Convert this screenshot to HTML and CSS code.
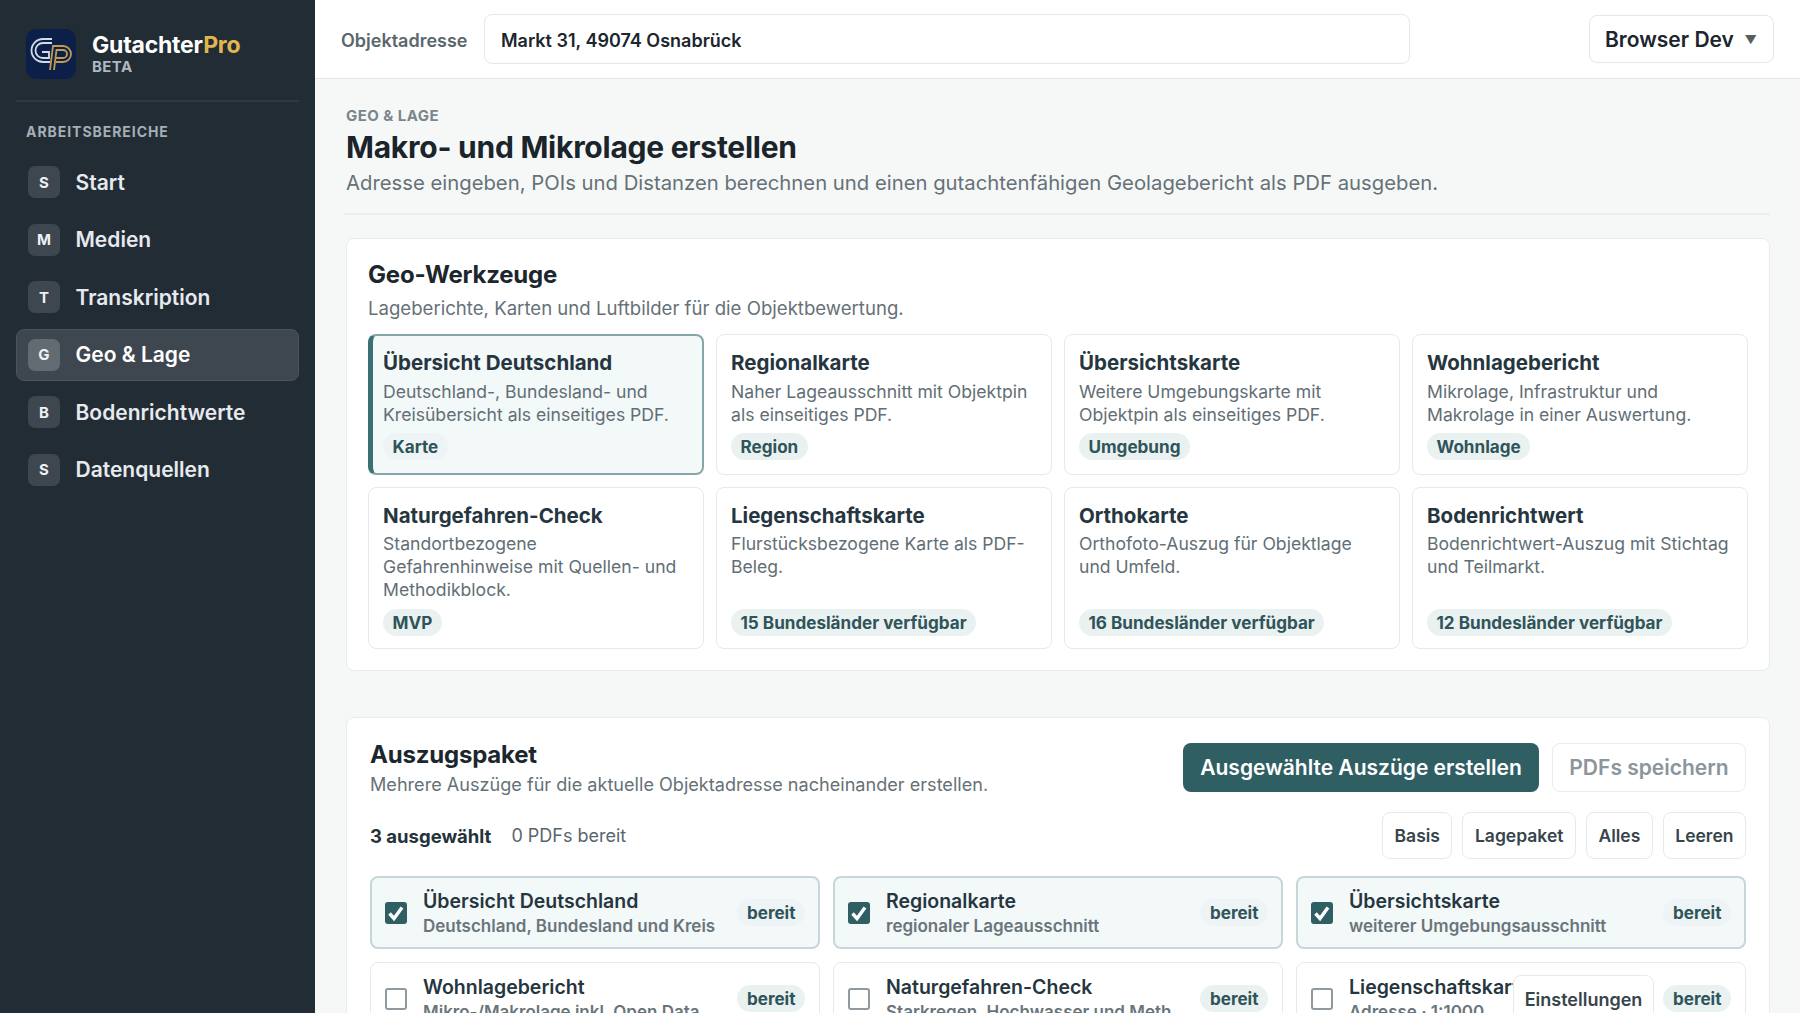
FILE: index.html
```html
<!DOCTYPE html>
<html lang="de">
<head>
  <meta charset="UTF-8">
  <title>GutachterPro</title>
  <link rel="stylesheet" href="styles.css">
</head>
<body>
  <!-- Sidebar -->
  <aside class="sidebar">
    <div class="brand">
      <svg class="logo" viewBox="0 0 50 50">
        <rect width="50" height="50" rx="10" fill="#0b1f48"/>
        <g fill="none" stroke-width="1.800">
          <path d="M26 10H17A11.500 11.500 0 0 0 17 33H24" stroke="#d5dbe6"/>
          <path d="M26 14H17A7.500 7.500 0 0 0 17 29H23V23H16" stroke="#d5dbe6"/>
          <path d="M24 41L27 17H37A8 8 0 0 1 37 33H30" stroke="#c39a54"/>
          <path d="M28 41L30.500 21H37A4 4 0 0 1 37 29H30" stroke="#c39a54"/>
        </g>
      </svg>
      <div class="brand-text">
        <div class="brand-name">Gutachter<span>Pro</span></div>
        <div class="brand-tag">BETA</div>
      </div>
    </div>
    <div class="nav-title">ARBEITSBEREICHE</div>
    <nav class="nav">
      <a class="nav-item"><span class="nav-key">S</span>Start</a>
      <a class="nav-item"><span class="nav-key">M</span>Medien</a>
      <a class="nav-item"><span class="nav-key">T</span>Transkription</a>
      <a class="nav-item active"><span class="nav-key">G</span>Geo &amp; Lage</a>
      <a class="nav-item"><span class="nav-key">B</span>Bodenrichtwerte</a>
      <a class="nav-item"><span class="nav-key">S</span>Datenquellen</a>
    </nav>
  </aside>

  <div class="main">
    <!-- Top bar -->
    <header class="topbar">
      <label class="address-label">Objektadresse</label>
      <div class="address-input">Markt 31, 49074 Osnabrück</div>
      <div class="profile-select">Browser Dev <span class="caret">▼</span></div>
    </header>

    <main class="content">
      <div class="page-head">
        <div class="eyebrow">GEO &amp; LAGE</div>
        <h1>Makro- und Mikrolage erstellen</h1>
        <p>Adresse eingeben, POIs und Distanzen berechnen und einen gutachtenfähigen Geolagebericht als PDF ausgeben.</p>
      </div>

      <section class="panel tools">
        <h2>Geo-Werkzeuge</h2>
        <p class="panel-sub">Lageberichte, Karten und Luftbilder für die Objektbewertung.</p>
        <div class="tool-grid">
          <div class="tool active">
            <h3>Übersicht Deutschland</h3>
            <p>Deutschland-, Bundesland- und Kreisübersicht als einseitiges PDF.</p>
            <span class="tag">Karte</span>
          </div>
          <div class="tool">
            <h3>Regionalkarte</h3>
            <p>Naher Lageausschnitt mit Objektpin als einseitiges PDF.</p>
            <span class="tag">Region</span>
          </div>
          <div class="tool">
            <h3>Übersichtskarte</h3>
            <p>Weitere Umgebungskarte mit Objektpin als einseitiges PDF.</p>
            <span class="tag">Umgebung</span>
          </div>
          <div class="tool">
            <h3>Wohnlagebericht</h3>
            <p>Mikrolage, Infrastruktur und Makrolage in einer Auswertung.</p>
            <span class="tag">Wohnlage</span>
          </div>
          <div class="tool">
            <h3>Naturgefahren-Check</h3>
            <p>Standortbezogene Gefahrenhinweise mit Quellen- und Methodikblock.</p>
            <span class="tag">MVP</span>
          </div>
          <div class="tool">
            <h3>Liegenschaftskarte</h3>
            <p>Flurstücksbezogene Karte als PDF-Beleg.</p>
            <span class="tag">15 Bundesländer verfügbar</span>
          </div>
          <div class="tool">
            <h3>Orthokarte</h3>
            <p>Orthofoto-Auszug für Objektlage und Umfeld.</p>
            <span class="tag">16 Bundesländer verfügbar</span>
          </div>
          <div class="tool">
            <h3>Bodenrichtwert</h3>
            <p>Bodenrichtwert-Auszug mit Stichtag und Teilmarkt.</p>
            <span class="tag">12 Bundesländer verfügbar</span>
          </div>
        </div>
      </section>

      <section class="panel package">
        <div class="package-head">
          <div>
            <h2>Auszugspaket</h2>
            <p class="panel-sub">Mehrere Auszüge für die aktuelle Objektadresse nacheinander erstellen.</p>
          </div>
          <div class="package-actions">
            <button class="btn-primary">Ausgewählte Auszüge erstellen</button>
            <button class="btn-disabled">PDFs speichern</button>
          </div>
        </div>
        <div class="package-bar">
          <div class="package-count"><strong>3 ausgewählt</strong><span>0 PDFs bereit</span></div>
          <div class="chips">
            <button class="chip">Basis</button>
            <button class="chip">Lagepaket</button>
            <button class="chip">Alles</button>
            <button class="chip">Leeren</button>
          </div>
        </div>
        <div class="extract-grid">
          <div class="extract checked">
            <span class="check"><svg viewBox="0 0 22 22"><path d="M4.500 11.500L9 16.500L17 5.500" fill="none" stroke="#fff" stroke-width="3.400"/></svg></span>
            <div class="extract-text"><h4>Übersicht Deutschland</h4><small>Deutschland, Bundesland und Kreis</small></div>
            <span class="tag">bereit</span>
          </div>
          <div class="extract checked">
            <span class="check"><svg viewBox="0 0 22 22"><path d="M4.500 11.500L9 16.500L17 5.500" fill="none" stroke="#fff" stroke-width="3.400"/></svg></span>
            <div class="extract-text"><h4>Regionalkarte</h4><small>regionaler Lageausschnitt</small></div>
            <span class="tag">bereit</span>
          </div>
          <div class="extract checked">
            <span class="check"><svg viewBox="0 0 22 22"><path d="M4.500 11.500L9 16.500L17 5.500" fill="none" stroke="#fff" stroke-width="3.400"/></svg></span>
            <div class="extract-text"><h4>Übersichtskarte</h4><small>weiterer Umgebungsausschnitt</small></div>
            <span class="tag">bereit</span>
          </div>
          <div class="extract">
            <span class="check"></span>
            <div class="extract-text"><h4>Wohnlagebericht</h4><small>Mikro-/Makrolage inkl. Open Data</small></div>
            <span class="tag">bereit</span>
          </div>
          <div class="extract">
            <span class="check"></span>
            <div class="extract-text"><h4>Naturgefahren-Check</h4><small>Starkregen, Hochwasser und Meth</small></div>
            <span class="tag">bereit</span>
          </div>
          <div class="extract">
            <span class="check"></span>
            <div class="extract-text"><h4>Liegenschaftskarte</h4><small>Adresse · 1:1000</small></div>
            <span class="tag">bereit</span>
          </div>
        </div>
      </section>
    </main>
  </div>

  <button class="settings-btn">Einstellungen</button>
</body>
</html>
```
FILE: styles.css
```css
* {
  box-sizing: border-box;
}
html, body {
  height: 100%;
}
body {
  margin: 0;
  display: flex;
  overflow: hidden;
  font-family: Inter, "Liberation Sans", sans-serif;
  color: #1c262d;
  background: #f6f8f8;
}
h1, h2, h3, h4, p {
  margin: 0;
}
button {
  font-family: inherit;
  cursor: pointer;
}

/* Sidebar */
.sidebar {
  width: 315px;
  flex-shrink: 0;
  background: #222c35;
  padding: 29px 16px 0;
}
.brand {
  display: flex;
  align-items: center;
  gap: 16px;
  padding: 0 10px 21px;
  border-bottom: 2px solid #2e3942;
}
.logo {
  width: 50px;
  height: 50px;
  flex-shrink: 0;
}
.brand-text {
  margin-top: -2px;
}
.brand-name {
  font-size: 23px;
  line-height: 26px;
  font-weight: 700;
  color: #fff;
  letter-spacing: -0.2px;
}
.brand-name span {
  color: #e0b64f;
}
.brand-tag {
  margin-top: 1px;
  font-size: 15px;
  line-height: 16px;
  font-weight: 700;
  color: #aeb8c0;
  letter-spacing: 0.4px;
}
.nav-title {
  margin: 21px 0 15px 10px;
  font-size: 14px;
  line-height: 18px;
  font-weight: 700;
  color: #a4afb7;
  letter-spacing: 0.95px;
}
.nav {
  display: flex;
  flex-direction: column;
  gap: 5px;
}
.nav-item {
  display: flex;
  align-items: center;
  gap: 15.500px;
  height: 52.500px;
  padding: 0 11px;
  border: 1px solid transparent;
  border-radius: 8px;
  font-size: 21px;
  font-weight: 600;
  color: #e6eaee;
}
.nav-item.active {
  background: #3e4750;
  border-color: #4a545c;
  color: #fff;
}
.nav-key {
  width: 32px;
  height: 32px;
  display: flex;
  align-items: center;
  justify-content: center;
  border-radius: 7px;
  background: #3e4750;
  font-size: 15px;
  font-weight: 700;
  color: #eef1f3;
}
.nav-item.active .nav-key {
  background: #626a72;
}

/* Top bar */
.main {
  flex: 1;
  min-width: 0;
  display: flex;
  flex-direction: column;
}
.topbar {
  height: 79px;
  flex-shrink: 0;
  display: flex;
  align-items: center;
  padding: 0 26px 1px 26px;
  background: #fff;
  border-bottom: 1px solid #e2e6e8;
}
.address-label {
  width: 143px;
  padding-top: 3px;
  font-size: 18px;
  font-weight: 600;
  color: #5b666d;
}
.address-input {
  width: 926px;
  height: 50px;
  display: flex;
  align-items: center;
  padding: 3px 16px 0;
  border: 1px solid #e4e8ea;
  border-radius: 8px;
  font-size: 18px;
  font-weight: 600;
}
.profile-select {
  margin-left: auto;
  width: 185px;
  height: 48px;
  display: flex;
  align-items: center;
  justify-content: space-between;
  padding: 1px 16px 0 15px;
  border: 1px solid #e4e8ea;
  border-radius: 8px;
  font-size: 21px;
  font-weight: 600;
}
.caret {
  font-size: 12px;
  color: #555f5c;
}

/* Content */
.content {
  flex: 1;
  min-height: 0;
  overflow: hidden;
  padding: 28px 30px 0 31px;
}
.page-head {
  padding-bottom: 16px;
  border-bottom: 2px solid #eceff0;
  margin: 0 0 23px -2px;
  padding-left: 2px;
}
.eyebrow {
  font-size: 15px;
  line-height: 18px;
  font-weight: 700;
  color: #7a858c;
  letter-spacing: 0.45px;
}
h1 {
  margin-top: 3px;
  font-size: 30px;
  line-height: 38px;
  font-weight: 700;
  letter-spacing: -0.25px;
  color: #1a242b;
}
.page-head p {
  margin-top: 3px;
  font-size: 20.300px;
  line-height: 28px;
  color: #667177;
}
.panel {
  background: #fff;
  border: 1px solid #e8ecee;
  border-radius: 8px;
  width: 1424px;
}
.tools {
  padding: 21px 21px 21px;
}
h2 {
  font-size: 24px;
  line-height: 30px;
  font-weight: 700;
  letter-spacing: -0.2px;
  color: #1c262d;
}
.panel-sub {
  font-size: 18.100px;
  line-height: 24px;
  color: #667177;
}
.tools .panel-sub {
  margin-top: 6px;
  font-size: 18.600px;
}
.tool-grid {
  display: grid;
  grid-template-columns: repeat(4, 336px);
  grid-template-rows: 141px 162px;
  gap: 12px;
  margin-top: 14px;
}
.tool {
  display: flex;
  flex-direction: column;
  align-items: flex-start;
  padding: 14px 14px 14px;
  border: 1px solid #e6eaec;
  border-radius: 8px;
}
.tool:nth-child(n+5) {
  padding-bottom: 12px;
}
.tool h3 {
  font-size: 20.500px;
  line-height: 28px;
  font-weight: 700;
  color: #263640;
}
.tool p {
  margin: 3px 0 5px;
  font-size: 17.600px;
  line-height: 23px;
  color: #626e75;
}
.tool:nth-child(n+5) p {
  margin-top: 2px;
}
.tool .tag {
  margin-top: auto;
}
.tool.active {
  padding: 13px 14px 13px 10px;
  background: #f3f8f9;
  border: 2px solid #85a6a8;
  border-left: 5px solid #3b7174;
}
.tag {
  display: inline-block;
  padding: 0 9.500px;
  border-radius: 14px;
  background: #eaf1f1;
  font-size: 17.100px;
  line-height: 27px;
  font-weight: 700;
  color: #2f5459;
  white-space: nowrap;
}
.tool.active .tag,
.extract.checked .tag {
  background: #eef4f5;
}

/* Package */
.package {
  margin-top: 46px;
  padding: 22px 23px 0;
}
.package-head {
  display: flex;
  justify-content: space-between;
  align-items: flex-start;
}
.package-head .panel-sub {
  margin-top: 2px;
}
.package-actions {
  display: flex;
  gap: 13px;
  margin-top: 3px;
}
.btn-primary {
  height: 49px;
  width: 356px;
  border: 0;
  border-radius: 8px;
  background: #2f5e63;
  color: #fff;
  font-size: 21px;
  font-weight: 600;
}
.btn-disabled {
  height: 49px;
  width: 194px;
  border: 1px solid #e8ecee;
  border-radius: 8px;
  background: #fff;
  color: #8b959b;
  font-size: 21px;
  font-weight: 600;
}
.package-bar {
  display: flex;
  justify-content: space-between;
  align-items: center;
  margin-top: 16px;
}
.package-count {
  display: flex;
  gap: 20px;
  font-size: 18px;
  color: #59656c;
}
.package-count strong {
  font-size: 18.500px;
  font-weight: 700;
  color: #24323a;
}
.chips {
  display: flex;
  gap: 10px;
}
.chip {
  height: 47px;
  padding: 0 11.500px;
  border: 1px solid #e6eaec;
  border-radius: 8px;
  background: #fff;
  font-size: 17.500px;
  font-weight: 600;
  color: #37444b;
}
.extract-grid {
  display: grid;
  grid-template-columns: repeat(3, 450px);
  gap: 13px;
  margin-top: 17px;
}
.extract {
  height: 73px;
  display: flex;
  align-items: center;
  gap: 16px;
  padding: 0 14px;
  border: 1px solid #e6eaec;
  border-radius: 8px;
}
.extract.checked {
  background: #f3f8f9;
  border: 2px solid #c6d6d9;
  padding: 0 13px;
}
.check {
  width: 22px;
  height: 22px;
  flex-shrink: 0;
  border: 2px solid #8f999e;
  border-radius: 3px;
  background: #fff;
}
.extract.checked .check {
  background: #2f5e63;
  border: 0;
  display: block;
}
.check svg {
  display: block;
  width: 22px;
  height: 22px;
}
.extract-text {
  flex: 1;
  min-width: 0;
  padding-top: 1px;
}
.extract h4 {
  font-size: 19.500px;
  line-height: 26px;
  font-weight: 600;
  color: #263640;
  white-space: nowrap;
  overflow: hidden;
}
.extract small {
  display: block;
  font-size: 17px;
  line-height: 24px;
  font-weight: 600;
  color: #69757b;
  white-space: nowrap;
  overflow: hidden;
}

/* Floating settings button */
.settings-btn {
  position: fixed;
  left: 1513px;
  top: 975px;
  width: 141px;
  height: 49px;
  border: 1px solid #e6eaec;
  border-radius: 8px;
  background: #fff;
  font-size: 18px;
  font-weight: 600;
  color: #37444b;
}
```
